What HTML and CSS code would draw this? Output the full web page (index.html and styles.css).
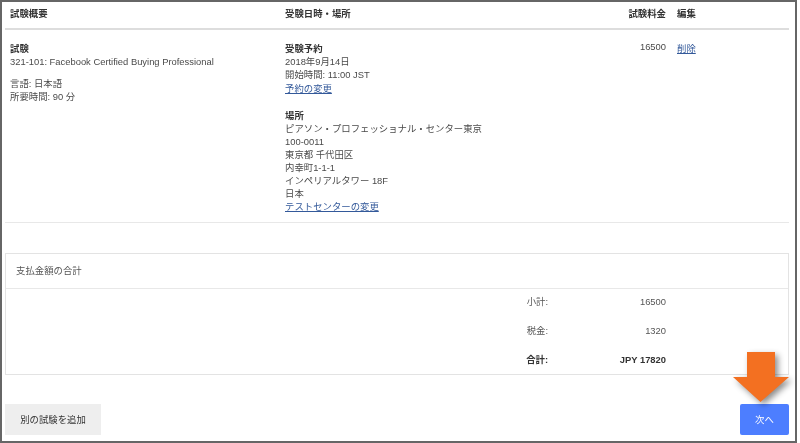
FILE: index.html
```html
<!DOCTYPE html>
<html lang="ja">
<head>
<meta charset="utf-8">
<title>試験概要</title>
<link rel="stylesheet" href="styles.css">
</head>
<body>
<div class="frame">
  <div class="sheet">
    <div class="grid head">
      <div>試験概要</div>
      <div>受験日時・場所</div>
      <div class="num">試験料金</div>
      <div class="edit">編集</div>
    </div>
    <div class="grid exam">
      <div class="cell">
        <p><b>試験</b><br>321-101: Facebook Certified Buying Professional</p>
        <p class="gap">言語: 日本語<br>所要時間: 90 分</p>
      </div>
      <div class="cell">
        <p><b>受験予約</b><br>2018年9月14日<br>開始時間: 11:00 JST<br><a class="change" href="#">予約の変更</a></p>
        <p class="gap-lg"><b>場所</b><br>ピアソン・プロフェッショナル・センター東京<br>100-0011<br>東京都 千代田区<br>内幸町1-1-1<br>インペリアルタワー 18F<br>日本<br><a href="#">テストセンターの変更</a></p>
      </div>
      <div class="cell num fee">16500</div>
      <div class="cell edit"><a href="#">削除</a></div>
    </div>
    <section class="panel">
      <h2 class="panel-head">支払金額の合計</h2>
      <div class="totals">
        <div class="row"><span class="label">小計:</span><span class="value">16500</span></div>
        <div class="row"><span class="label">税金:</span><span class="value">1320</span></div>
        <div class="row strong"><span class="label">合計:</span><span class="value">JPY 17820</span></div>
      </div>
    </section>
    <div class="actions">
      <button class="btn" type="button">別の試験を追加</button>
      <button class="btn primary" type="button">次へ</button>
    </div>
  </div>
  <svg class="arrow" width="56" height="50" viewBox="0 0 56 50" aria-hidden="true">
    <path d="M14 0H42V25H56L27.500 50 0 25H14Z" fill="#f37021"/>
  </svg>
</div>
</body>
</html>
```
FILE: styles.css
```css
* { box-sizing: border-box; }
html, body { margin: 0; padding: 0; background: #fff; }
body {
  width: 800px;
  height: 443px;
  overflow: hidden;
  font-family: "Liberation Sans", "Noto Sans CJK JP", sans-serif;
  font-size: 9.4px;
  line-height: 13px;
  color: #4a4a4a;
}
.frame {
  position: relative;
  width: 797px;
  height: 443px;
  border: 2px solid #666;
  filter: blur(0.35px);
}
.sheet { padding: 0 6px 0 3px; }
.grid {
  display: grid;
  grid-template-columns: 275px 305px 81px 1fr;
}
.grid > div { padding-left: 5px; }
.grid > .edit { padding-left: 11px; }
.head {
  height: 28px;
  align-items: center;
  padding-bottom: 4px;
  border-bottom: 2px solid #ddd;
  font-weight: bold;
  color: #333;
}
.exam {
  height: 193px;
  padding-top: 12px;
  border-bottom: 1px solid #e8e8e8;
}
.grid > .num { text-align: right; padding-left: 0; }
.fee { margin-top: -2px; }
p { margin: 0; }
b { color: #333; }
.gap { margin-top: 9px; }
.gap-lg { margin-top: 14px; }
a { color: #33599a; text-decoration: underline; }
.change { display: inline-block; margin-top: 1px; }
.panel {
  height: 122px;
  margin-top: 30px;
  border: 1px solid #e3e3e3;
}
.panel-head {
  margin: 0;
  height: 35px;
  padding: 10px 0 0 10px;
  border-bottom: 1px solid #e8e8e8;
  font-size: inherit;
  line-height: 13px;
  font-weight: normal;
  color: #555;
}
.totals { padding-top: 6px; }
.row {
  display: flex;
  height: 29px;
  color: #555;
}
.label { width: 542px; text-align: right; }
.value { width: 118px; text-align: right; }
.strong { font-weight: bold; color: #333; }
.actions {
  display: flex;
  justify-content: space-between;
  margin-top: 29px;
}
.btn {
  width: 96px;
  height: 31px;
  border: 0;
  background: #eee;
  padding: 0;
  font: inherit;
  color: #333;
}
.primary {
  width: 49px;
  border-radius: 2px;
  background: #4d7eff;
  color: #fff;
}
.arrow {
  position: absolute;
  left: 731px;
  top: 350px;
  filter: drop-shadow(3px 3px 3px rgba(0,0,0,0.45));
}
```
